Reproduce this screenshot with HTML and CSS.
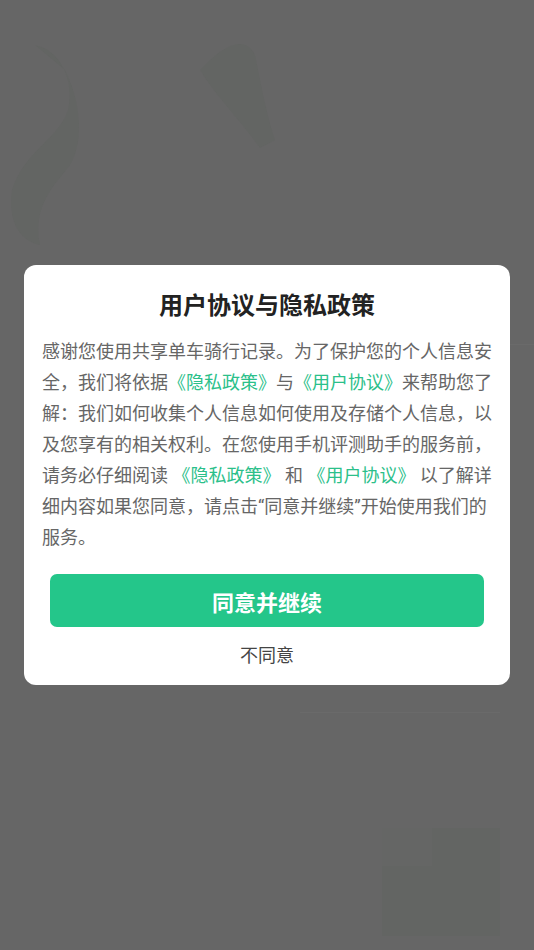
FILE: index.html
```html
<!DOCTYPE html>
<html lang="zh-CN">
<head>
<meta charset="utf-8">
<title>用户协议与隐私政策</title>
<link rel="stylesheet" href="styles.css">
</head>
<body>
<svg class="backdrop" viewBox="0 0 534 950" preserveAspectRatio="none" aria-hidden="true">
  <path d="M35 45 C60 50 75 80 68 110 C58 140 25 150 12 190 C8 220 18 240 40 245 C32 205 55 185 70 165 C85 140 80 100 65 70 Z" fill="#636563"/>
  <path d="M205 65 C225 45 245 35 255 55 C262 90 268 120 275 140 L260 148 C240 120 215 95 200 70 Z" fill="#636563"/>
  <rect x="382" y="828" width="118" height="108" fill="#636563"/>
  <rect x="382" y="828" width="50" height="38" fill="#656665"/>
  <rect x="300" y="712" width="200" height="1" fill="#6a6a6a"/>
  <rect x="440" y="344" width="94" height="1" fill="#6a6a6a"/>
</svg>
<div class="overlay">
  <div class="modal">
    <h1 class="title">用户协议与隐私政策</h1>
    <p class="body">感谢您使用共享单车骑行记录。为了保护您的个人信息安全，我们将依据<span class="link">《隐私政策》</span>与<span class="link">《用户协议》</span>来帮助您了解：我们如何收集个人信息如何使用及存储个人信息，以及您享有的相关权利。在您使用手机评测助手的服务前，请务必仔细阅读 <span class="link">《隐私政策》</span> 和 <span class="link">《用户协议》</span> 以了解详细内容如果您同意，请点击“同意并继续”开始使用我们的服务。</p>
    <button class="agree" type="button">同意并继续</button>
    <button class="disagree" type="button">不同意</button>
  </div>
</div>
</body>
</html>
```

FILE: styles.css
```css
* { box-sizing: border-box; }
html, body {
  margin: 0;
  padding: 0;
  width: 100%;
  height: 100%;
}
body {
  background: #666666;
  font-family: "Roboto", "Noto Sans CJK SC", sans-serif;
  overflow: hidden;
}
.backdrop {
  position: fixed;
  left: 0;
  top: 0;
  width: 534px;
  height: 950px;
}
.overlay {
  position: relative;
  height: 950px;
  display: flex;
  align-items: center;
  justify-content: center;
}
.modal {
  width: 486px;
  height: 420px;
  background: #ffffff;
  border-radius: 12px;
  padding: 26px 18px 17px;
  display: flex;
  flex-direction: column;
}
.title {
  margin: 0;
  font-size: 24px;
  line-height: 30px;
  font-weight: 700;
  color: #222222;
  text-align: center;
}
.body {
  margin: 14.5px 0 0;
  font-size: 18px;
  line-height: 31px;
  color: #666666;
}
.link {
  color: #2bc08a;
}
.agree {
  margin: 21.5px 8px 0;
  height: 53px;
  border: none;
  border-radius: 7px;
  background: #24c68a;
  color: #ffffff;
  font-family: inherit;
  font-size: 22px;
  font-weight: 700;
  padding: 0;
}
.disagree {
  margin: 17px 0 0;
  border: none;
  background: transparent;
  color: #444444;
  font-family: inherit;
  font-size: 18px;
  line-height: 24px;
  padding: 0;
}
```
